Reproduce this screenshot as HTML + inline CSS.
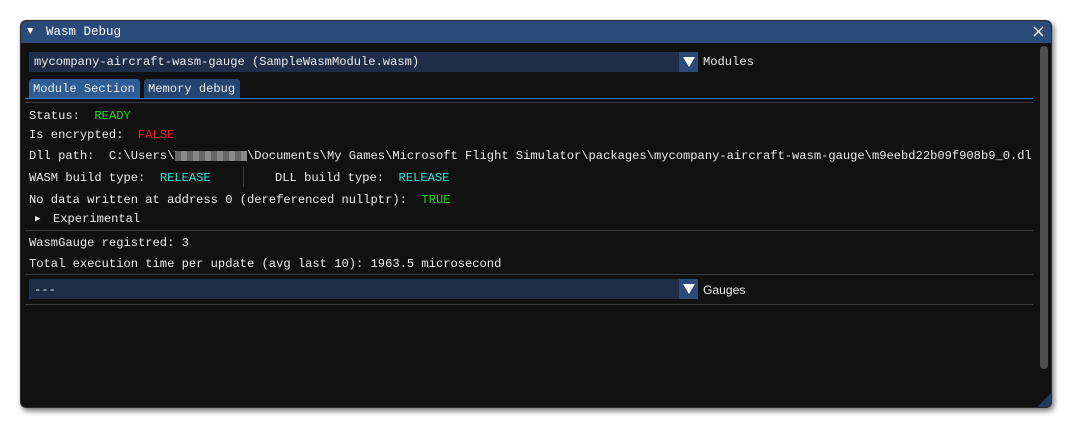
<!DOCTYPE html><html><head><style>
body{margin:0;width:1071px;height:427px;background:#fff;position:relative;overflow:hidden;font-family:"Liberation Mono",monospace;font-size:12.12px;color:#ececec}
.win{position:absolute;left:20px;top:20px;width:1030px;height:386px;background:#111;border-radius:6px;box-shadow:2px 3px 6px rgba(0,0,0,.55);overflow:hidden;border:1px solid #2a2a2a}
.title{position:absolute;left:0;top:0;right:0;height:22px;background:#2a4a7a;color:#fff}
.a{position:absolute;white-space:pre;line-height:14px}
.combo{position:absolute;left:8px;width:650px;height:20px;background:#1f2e48}
.btn{position:absolute;left:658px;width:19px;height:20px;background:#2a4a7a}
.tri{position:absolute;left:4px;top:5px;width:0;height:0;border-left:6px solid transparent;border-right:6px solid transparent;border-top:10px solid #fff}
.sep{position:absolute;left:4px;width:1008px;height:1px;background:#3d3d44}
.g{color:#19d919}.r{color:#ff1a1a}.c{color:#19e6e6}
</style></head><body>
<div class="win">
<div class="title"><div class="a" style="left:6px;top:4px;font-size:11px">▼</div><div class="a" style="left:25px;top:4px;font-size:12.5px">Wasm Debug</div>
<svg style="position:absolute;left:1012px;top:5px" width="11" height="11"><path d="M1 1L10 10M10 1L1 10" stroke="#fff" stroke-width="1.3"/></svg></div>
<div class="combo" style="top:31px"></div><div class="btn" style="top:31px"><div class="tri" style="left:4px"></div></div>
<div class="a" style="left:13px;top:34px">mycompany-aircraft-wasm-gauge (SampleWasmModule.wasm)</div>
<div class="a" style="left:682px;top:34px">Modules</div>
<div style="position:absolute;left:8px;top:58px;width:111px;height:19px;background:#2e5c95;border-radius:3px 3px 0 0"></div>
<div style="position:absolute;left:123px;top:58px;width:96px;height:19px;background:#244570;border-radius:3px 3px 0 0"></div>
<div class="a" style="left:12px;top:61px">Module Section</div><div class="a" style="left:127px;top:61px">Memory debug</div>
<div style="position:absolute;left:4px;top:77px;width:1008px;height:1px;background:#3a78c8"></div>
<div class="sep" style="top:81px"></div>
<div class="a" style="left:8px;top:88px">Status:  <span class="g">READY</span></div>
<div class="a" style="left:8px;top:107px">Is encrypted:  <span class="r">FALSE</span></div>
<div class="a" style="left:8px;top:128px">Dll path:  C:\Users\          \Documents\My Games\Microsoft Flight Simulator\packages\mycompany-aircraft-wasm-gauge\m9eebd22b09f908b9_0.dl</div>
<div style="position:absolute;left:154px;top:130px;width:72px;height:10px;background:repeating-linear-gradient(90deg,#666 0 6px,#888 6px 12px)"></div>
<div class="a" style="left:8px;top:150px">WASM build type:  <span class="c">RELEASE</span></div>
<div style="position:absolute;left:222px;top:146px;width:1px;height:20px;background:#3d3d44"></div>
<div class="a" style="left:254px;top:150px">DLL build type:  <span class="c">RELEASE</span></div>
<div class="a" style="left:8px;top:172px">No data written at address 0 (dereferenced nullptr):  <span class="g">TRUE</span></div>
<div class="a" style="left:14px;top:191px;font-size:9px">▶</div><div class="a" style="left:32px;top:191px">Experimental</div>
<div class="sep" style="top:209px"></div>
<div class="a" style="left:8px;top:215px">WasmGauge registred: 3</div>
<div class="a" style="left:8px;top:236px">Total execution time per update (avg last 10): 1963.5 microsecond</div>
<div class="sep" style="top:253px"></div>
<div class="combo" style="top:258px"></div><div class="btn" style="top:258px"><div class="tri"></div></div>
<div class="a" style="left:13px;top:262px">---</div>
<div class="a" style="left:682px;top:262px;font-family:'Liberation Sans',sans-serif">Gauges</div>
<div class="sep" style="top:283px"></div>
<div style="position:absolute;left:1019px;top:25px;width:8px;height:323px;background:#4f4f4f;border-radius:4px"></div>
<div style="position:absolute;left:1016px;top:372px;width:0;height:0;border-left:14px solid transparent;border-bottom:14px solid #233a5c"></div>
</div>
</body></html>
